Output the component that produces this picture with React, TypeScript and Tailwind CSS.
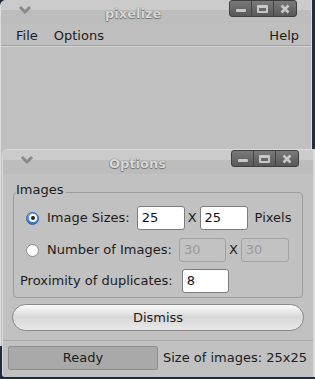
import React from "react";

const font = { fontFamily: '"DejaVu Sans", Verdana, sans-serif' };

function Chevron() {
  return (
    <svg width="14" height="9" viewBox="0 0 14 9" className="block">
      <path d="M2 2 L7 7 L12 2" fill="none" stroke="#8a8a8a" strokeWidth="3" />
    </svg>
  );
}

function WinButtons() {
  return (
    <div className="flex h-[17px] overflow-hidden rounded-[3px] border border-[#3f3f3f] bg-gradient-to-b from-[#7a7a7a] to-[#585858]">
      <div className="flex w-[22px] items-center justify-center border-r border-[#444]">
        <div className="mt-[3px] h-[3px] w-[10px] rounded-[1px] bg-[#c8c8c8]" />
      </div>
      <div className="flex w-[22px] items-center justify-center border-r border-[#444]">
        <div className="h-[8px] w-[11px] rounded-[1px] border-[2px] border-t-[3px] border-[#c8c8c8]" />
      </div>
      <div className="flex w-[22px] items-center justify-center">
        <svg width="10" height="10" viewBox="0 0 10 10">
          <path d="M1.5 1.5 L8.5 8.5 M8.5 1.5 L1.5 8.5" stroke="#c8c8c8" strokeWidth="2.6" />
        </svg>
      </div>
    </div>
  );
}

function TitleBar({ title, titleLeft }: { title: string; titleLeft: string }) {
  return (
    <div className="relative h-[24px] bg-gradient-to-b from-[#cbcbcb] from-40% to-[#bdbdbd] to-40%">
      <div className="absolute left-[17px] top-[5px]">
        <Chevron />
      </div>
      <div
        className={`absolute top-[4px] text-[13px] font-bold text-[#d9d9d9] [text-shadow:0_0_1px_#555,0_1px_1px_#777] ${titleLeft}`}
      >
        {title}
      </div>
      <div className="absolute right-[14px] top-0">
        <WinButtons />
      </div>
    </div>
  );
}

function Radio({ checked }: { checked: boolean }) {
  if (checked) {
    return (
      <div className="flex h-[13px] w-[13px] shrink-0 items-center justify-center rounded-full border border-[#2d62a8] bg-gradient-to-b from-[#7fb0ea] to-[#3573c9]">
        <div className="flex h-[8px] w-[8px] items-center justify-center rounded-full bg-white">
          <div className="h-[4px] w-[4px] rounded-full bg-[#222]" />
        </div>
      </div>
    );
  }
  return <div className="h-[13px] w-[13px] shrink-0 rounded-full border border-[#8c8c8c] bg-white" />;
}

function Field({ value, disabled, w }: { value: string; disabled?: boolean; w: string }) {
  return (
    <div
      className={`flex h-[24px] shrink-0 items-center rounded-[3px] border px-[4px] text-[13px] ${w} ${
        disabled ? "border-[#a3a3a3] bg-[#c2c2c2] text-[#9a9a9a]" : "border-[#7c7c7c] bg-white text-[#111]"
      }`}
    >
      {value}
    </div>
  );
}

export default function App() {
  return (
    <div
      className="relative h-[379px] w-[315px] overflow-hidden whitespace-nowrap bg-[#1e2c3b] text-[13px] text-[#1c1c1c]"
      style={font}
    >
      {/* main window */}
      <div className="absolute left-0 top-0 h-[346px] w-[312px] overflow-hidden rounded-tl-[6px] border-l border-r border-[#dedede] bg-[#c0c0c0]">
        <TitleBar title="pixelize" titleLeft="left-[104px]" />
        <div className="flex h-[22px] items-center border-b border-[#a4a4a4] bg-[#bfbfbf] px-[15px] pt-[3px]">
          <span>File</span>
          <span className="ml-[16px]">Options</span>
          <span className="ml-auto mr-[-3px]">Help</span>
        </div>
        <div className="h-px bg-[#d2d2d2]" />
      </div>

      {/* options window */}
      <div className="absolute left-[2px] top-[149px] flex h-[228px] w-[313px] flex-col overflow-hidden rounded-bl-[3px] rounded-tl-[6px] border-l border-r-[2px] border-t border-[#dadada] bg-[#c1c1c1]">
        <TitleBar title="Options" titleLeft="left-[106px]" />
        <div className="px-[10px] pt-[9px]">
          <div className="relative mt-[9px] rounded-[4px] border border-[#9c9c9c] px-[12px] pb-[4px] pt-[13px]">
            <div className="absolute -top-[11px] left-[2px] bg-[#c1c1c1] pr-[2px] leading-[16px]">Images</div>
            <div className="flex items-center">
              <Radio checked />
              <span className="ml-[8px]">Image Sizes:</span>
              <div className="ml-[7px]">
                <Field value="25" w="w-[48px]" />
              </div>
              <span className="mx-[3px]">X</span>
              <Field value="25" w="w-[48px]" />
              <span className="ml-[7px]">Pixels</span>
            </div>
            <div className="mt-[8px] flex items-center">
              <Radio checked={false} />
              <span className="ml-[8px]">Number of Images:</span>
              <div className="ml-[7px]">
                <Field value="30" disabled w="w-[47px]" />
              </div>
              <span className="mx-[3px]">X</span>
              <Field value="30" disabled w="w-[48px]" />
            </div>
            <div className="-ml-[6px] mt-[7px] flex items-center">
              <span>Proximity of duplicates:</span>
              <div className="ml-[9px]">
                <Field value="8" w="w-[47px]" />
              </div>
            </div>
          </div>
          <div className="mx-[-1px] mt-[6px] flex h-[27px] items-center justify-center rounded-full border border-[#8a8a8a] bg-gradient-to-b from-[#fbfbfb] via-[#d8d8d8] to-[#e9e9e9] text-[13px]">
            Dismiss
          </div>
        </div>
        <div className="mt-[9px] h-px bg-[#a9a9a9]" />
        <div className="flex items-center px-[5px] pt-[5px]">
          <div className="flex h-[24px] w-[150px] items-center justify-center rounded-[2px] border border-[#8e8e8e] bg-[#a9a9a9]">
            Ready
          </div>
          <span className="ml-[5px]">Size of images: 25x25</span>
        </div>
      </div>
    </div>
  );
}
